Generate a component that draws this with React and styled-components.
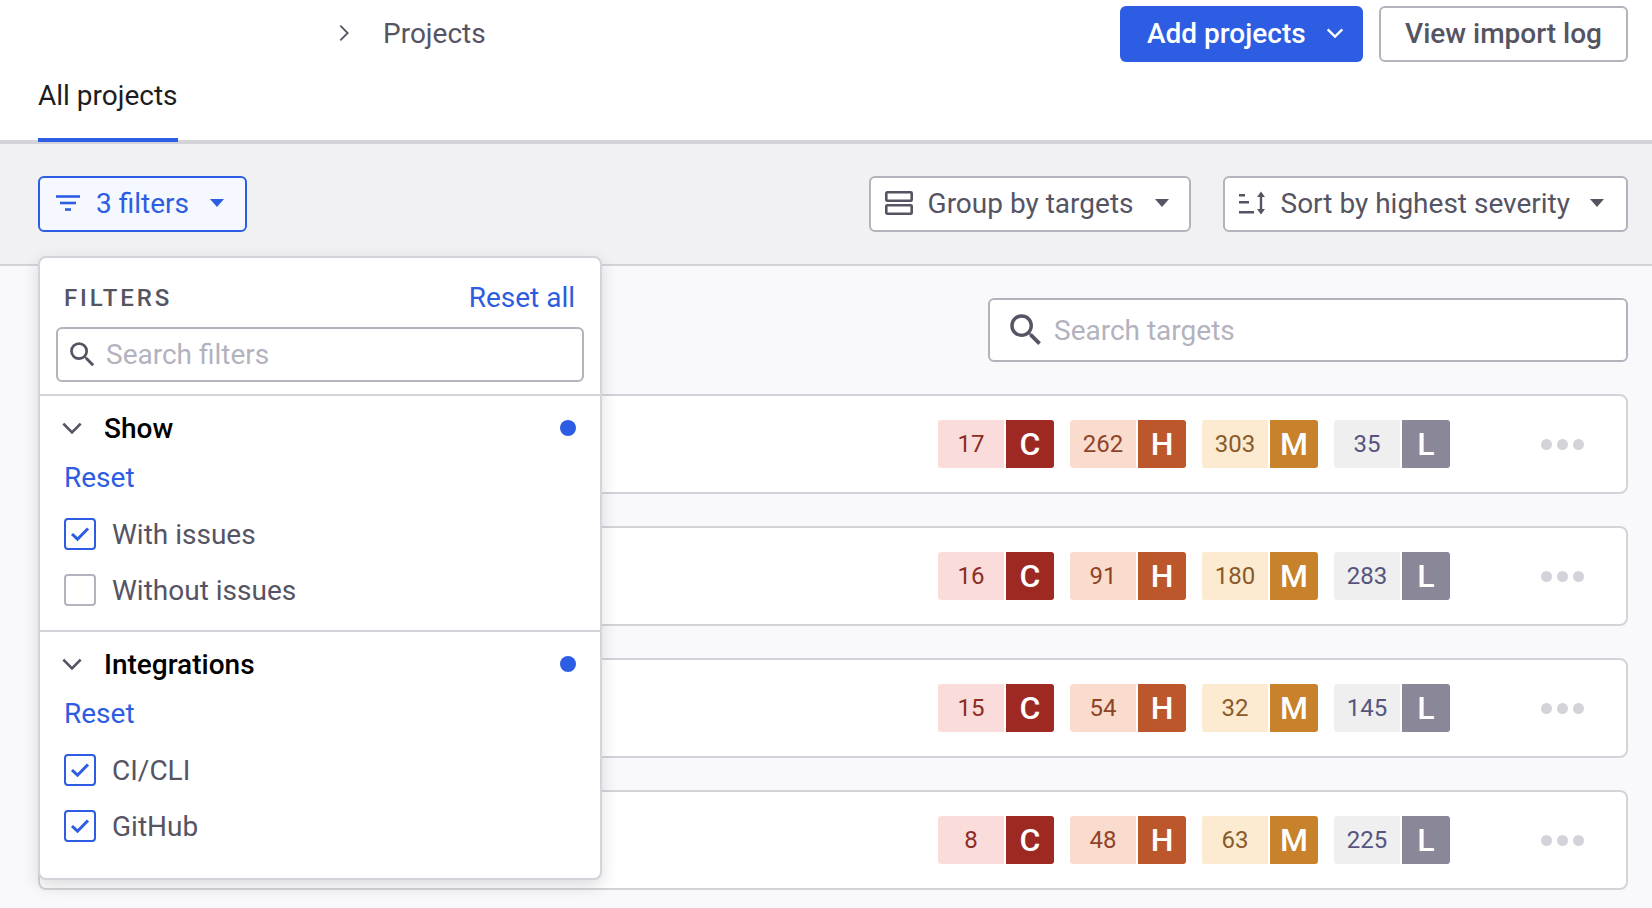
import React from "react";
import styled, { createGlobalStyle } from "styled-components";

const GlobalStyle = createGlobalStyle`
  html, body {
    margin: 0;
    height: 100%;
    overflow: hidden;
    background: #f9f9fb;
    font-family: Roboto, "Liberation Sans", sans-serif;
    color: #555463;
  }
  * {
    box-sizing: border-box;
  }
`;

const BLUE = "#2d5de2";

const Page = styled.div`
  height: 908px;
  overflow: hidden;
  display: flex;
  flex-direction: column;
`;

const Header = styled.header`
  background: #fff;
  height: 144px;
  border-bottom: 4px solid #d3d3d9;
  padding: 6px 24px 0 38px;
`;

const TopRow = styled.div`
  display: flex;
  align-items: center;
  height: 56px;
  gap: 16px;
`;

const Breadcrumb = styled.div`
  flex: 1;
  display: flex;
  align-items: center;
  gap: 28px;
  padding: 0 0 2px 295px;
  font-size: 28px;
  color: #555463;
`;

const PrimaryButton = styled.button`
  height: 56px;
  width: 243px;
  display: flex;
  align-items: center;
  gap: 18px;
  padding: 0 0 2px 27px;
  border: 0;
  border-radius: 6px;
  background: ${BLUE};
  color: #fff;
  font: 500 28px Roboto, sans-serif;
`;

const OutlineButton = styled.button`
  height: 56px;
  width: 249px;
  padding: 0 0 2px;
  border: 2px solid #b3b2bd;
  border-radius: 6px;
  background: #fff;
  color: #555463;
  font: 500 28px Roboto, sans-serif;
`;

const Tab = styled.div`
  width: max-content;
  height: 80px;
  padding-top: 13px;
  border-bottom: 4px solid ${BLUE};
  font-size: 28px;
  line-height: 42px;
  color: #1c1c21;
`;

const Toolbar = styled.div`
  height: 122px;
  background: #f1f1f4;
  border-bottom: 2px solid #d3d3d9;
  padding: 32px 24px 0 38px;
  display: flex;
  align-items: flex-start;
`;

const FilterAnchor = styled.div`
  position: relative;
  margin-right: auto;
`;

const Select = styled.button`
  height: 56px;
  display: flex;
  align-items: center;
  padding: ${(p) => p.$padding};
  gap: ${(p) => p.$gap}px;
  margin-left: ${(p) => p.$offset || 0}px;
  border: 2px solid ${(p) => (p.$active ? BLUE : "#b3b2bd")};
  border-radius: 6px;
  background: ${(p) => (p.$active ? "#f5f8ff" : "#fff")};
  color: ${(p) => (p.$active ? BLUE : "#555463")};
  font: 400 28px Roboto, sans-serif;
  white-space: nowrap;
`;

const Caret = styled.span`
  width: 0;
  height: 0;
  margin-left: ${(p) => p.$offset}px;
  border-left: 7.5px solid transparent;
  border-right: 7.5px solid transparent;
  border-top: 8px solid currentColor;
`;

const FilterMenu = styled.div`
  position: absolute;
  z-index: 2;
  top: 80px;
  left: 0;
  width: 564px;
  height: 624px;
  background: #fff;
  border: 2px solid #d3d3d9;
  border-radius: 8px;
  box-shadow: 0 6px 16px rgba(60, 60, 80, 0.18);
`;

const MenuHead = styled.div`
  height: 138px;
  padding: 22px 16px 0 16px;
  border-bottom: 2px solid #d3d3d9;
`;

const MenuTitleRow = styled.div`
  display: flex;
  justify-content: space-between;
  align-items: center;
  height: 36px;
  padding: 0 9px 0 8px;
  margin-bottom: 11px;
`;

const MenuTitle = styled.span`
  font-size: 24px;
  font-weight: 500;
  letter-spacing: 2.9px;
  color: #555463;
`;

const Link = styled.a`
  color: ${BLUE};
  font-size: 28px;
  line-height: 36px;
`;

const SearchBox = styled.div`
  display: flex;
  align-items: center;
  width: ${(p) => p.$width}px;
  height: ${(p) => p.$height}px;
  padding-left: ${(p) => p.$inset}px;
  gap: ${(p) => p.$gap}px;
  border: 2px solid #b3b2bd;
  border-radius: 6px;
  background: #fff;
  color: #b3b2bd;
  font-size: 28px;
`;

const Section = styled.section`
  height: 236px;
  padding: 14px 24px 0 24px;
  border-bottom: ${(p) => (p.$last ? "0" : "2px solid #d3d3d9")};
`;

const SectionHead = styled.div`
  display: flex;
  align-items: center;
  height: 36px;
  margin: 0 0 14px -5px;
`;

const SectionName = styled.span`
  flex: 1;
  margin-left: 19px;
  font-size: 28px;
  font-weight: 500;
  color: #000;
`;

const Dot = styled.span`
  width: 16px;
  height: 16px;
  border-radius: 50%;
  background: ${BLUE};
`;

const SectionReset = styled.div`
  margin-bottom: 22px;
`;

const Option = styled.label`
  display: flex;
  align-items: center;
  height: 32px;
  gap: 16px;
  margin-bottom: 24px;
  font-size: 28px;
`;

const Box = styled.span`
  width: 32px;
  height: 32px;
  display: flex;
  align-items: center;
  justify-content: center;
  border: 2px solid ${(p) => (p.$on ? BLUE : "#b3b2bd")};
  border-radius: 4px;
  background: #fff;
`;

const Content = styled.main`
  flex: 1;
  padding: 32px 24px 0 38px;
`;

const SearchRow = styled.div`
  display: flex;
  justify-content: flex-end;
  margin-bottom: 32px;
`;

const ProjectList = styled.div`
  display: flex;
  flex-direction: column;
  gap: 32px;
`;

const ProjectCard = styled.div`
  height: 100px;
  display: flex;
  align-items: center;
  justify-content: flex-end;
  background: #fff;
  border: 2px solid #d3d3d9;
  border-radius: 8px;
  padding-right: 42px;
`;

const Severities = styled.div`
  display: flex;
  gap: 16px;
  margin-right: 91px;
`;

const Severity = styled.div`
  display: flex;
  gap: 2px;
  height: 48px;
`;

const Count = styled.span`
  width: 66px;
  display: flex;
  align-items: center;
  justify-content: center;
  border-radius: 3px 0 0 3px;
  background: ${(p) => p.$bg};
  color: ${(p) => p.$fg};
  font-size: 24px;
`;

const Letter = styled.span`
  width: 48px;
  display: flex;
  align-items: center;
  justify-content: center;
  border-radius: 0 3px 3px 0;
  background: ${(p) => p.$bg};
  color: #fff;
  font-size: 32px;
  font-weight: 500;
`;

const Dots = styled.div`
  display: flex;
  gap: 5px;
`;

const MoreDot = styled.span`
  width: 11px;
  height: 11px;
  border-radius: 50%;
  background: #d3d3d9;
`;

const LEVELS = [
  { letter: "C", bg: "#fadcdb", fg: "#8b2c25", solid: "#9e2822" },
  { letter: "H", bg: "#fadcce", fg: "#8f4428", solid: "#bc572b" },
  { letter: "M", bg: "#fcebd1", fg: "#8a5a2b", solid: "#c7822b" },
  { letter: "L", bg: "#efefef", fg: "#555580", solid: "#8a8799" },
];

const PROJECTS = [
  [17, 262, 303, 35],
  [16, 91, 180, 283],
  [15, 54, 32, 145],
  [8, 48, 63, 225],
];

const SEARCH_PATH =
  "M9.5,3A6.5,6.5 0 0,1 16,9.5C16,11.11 15.41,12.59 14.44,13.73L14.71,14H15.5L20.5,19L19,20.5L14,15.5V14.71L13.73,14.44C12.59,15.41 11.11,16 9.5,16A6.5,6.5 0 0,1 3,9.5A6.5,6.5 0 0,1 9.5,3M9.5,5C7,5 5,7 5,9.5C5,12 7,14 9.5,14C12,14 14,12 14,9.5C14,7 12,5 9.5,5Z";

const SearchIcon = ({ size }) => (
  <svg width={size} height={size} viewBox="0 0 24 24" fill="#555463">
    <path d={SEARCH_PATH} />
  </svg>
);

const Chevron = ({ size, color, rotate = 0, width = 2 }) => (
  <svg
    width={size}
    height={size}
    viewBox="0 0 24 24"
    fill="none"
    stroke={color}
    strokeWidth={width}
    style={{ transform: `rotate(${rotate}deg)` }}
  >
    <path d="M4 8l8 8 8-8" />
  </svg>
);

const FilterIcon = () => (
  <svg width="24" height="16" viewBox="0 0 24 16" fill={BLUE}>
    <rect x="0" y="0.2" width="24" height="2.6" />
    <rect x="4" y="6.7" width="16" height="2.6" />
    <rect x="9" y="13.2" width="6" height="2.6" />
  </svg>
);

const GroupIcon = () => (
  <svg width="28" height="24" viewBox="0 0 28 24" fill="none" stroke="#555463" strokeWidth="2.6">
    <rect x="1.3" y="1.3" width="25.4" height="8.4" rx="1" />
    <rect x="1.3" y="14.3" width="25.4" height="8.4" rx="1" />
  </svg>
);

const SortIcon = () => (
  <svg width="28" height="24" viewBox="0 0 28 24" fill="#555463">
    <rect x="0" y="3" width="6" height="2.5" />
    <rect x="0" y="10" width="10" height="2.5" />
    <rect x="0" y="20" width="15" height="2.5" />
    <rect x="20.8" y="3" width="2.4" height="18" />
    <path d="M22 0.5l4 5.5h-8zM22 23.5l4-5.5h-8z" />
  </svg>
);

const CheckIcon = () => (
  <svg width="20" height="20" viewBox="0 0 20 20" fill="none" stroke={BLUE} strokeWidth="3">
    <path d="M2 10l5.5 5.2L18 4.5" />
  </svg>
);

const FilterOption = ({ on, children }) => (
  <Option>
    <Box $on={on}>{on && <CheckIcon />}</Box>
    {children}
  </Option>
);

const FilterSection = ({ name, last, options }) => (
  <Section $last={last}>
    <SectionHead>
      <Chevron size={26} color="#555463" width={2.5} />
      <SectionName>{name}</SectionName>
      <Dot />
    </SectionHead>
    <SectionReset>
      <Link>Reset</Link>
    </SectionReset>
    {options.map((o) => (
      <FilterOption key={o.label} on={o.on}>
        {o.label}
      </FilterOption>
    ))}
  </Section>
);

export default function App() {
  return (
    <Page>
      <GlobalStyle />
      <Header>
        <TopRow>
          <Breadcrumb>
            <Chevron size={22} color="#555463" rotate={-90} />
            Projects
          </Breadcrumb>
          <PrimaryButton>
            Add projects
            <Chevron size={22} color="#fff" width={2.5} />
          </PrimaryButton>
          <OutlineButton>View import log</OutlineButton>
        </TopRow>
        <Tab>All projects</Tab>
      </Header>
      <Toolbar>
        <FilterAnchor>
          <Select $active $padding="0 21px 2px 16px" $gap={16}>
            <FilterIcon />
            3 filters
            <Caret $offset={5} />
          </Select>
          <FilterMenu>
            <MenuHead>
              <MenuTitleRow>
                <MenuTitle>FILTERS</MenuTitle>
                <Link>Reset all</Link>
              </MenuTitleRow>
              <SearchBox $width={528} $height={55} $inset={8} $gap={7}>
                <SearchIcon size={33} />
                Search filters
              </SearchBox>
            </MenuHead>
            <FilterSection
              name="Show"
              options={[
                { label: "With issues", on: true },
                { label: "Without issues", on: false },
              ]}
            />
            <FilterSection
              name="Integrations"
              last
              options={[
                { label: "CI/CLI", on: true },
                { label: "GitHub", on: true },
              ]}
            />
          </FilterMenu>
        </FilterAnchor>
        <Select $padding="0 20px 2px 14px" $gap={15}>
          <GroupIcon />
          Group by targets
          <Caret $offset={6} />
        </Select>
        <Select $offset={32} $padding="0 22px 2px 14px" $gap={14}>
          <SortIcon />
          Sort by highest severity
          <Caret $offset={6} />
        </Select>
      </Toolbar>
      <Content>
        <SearchRow>
          <SearchBox $width={640} $height={64} $inset={15} $gap={7}>
            <SearchIcon size={42} />
            Search targets
          </SearchBox>
        </SearchRow>
        <ProjectList>
          {PROJECTS.map((counts, i) => (
            <ProjectCard key={i}>
              <Severities>
                {LEVELS.map((level, j) => (
                  <Severity key={level.letter}>
                    <Count $bg={level.bg} $fg={level.fg}>
                      {counts[j]}
                    </Count>
                    <Letter $bg={level.solid}>{level.letter}</Letter>
                  </Severity>
                ))}
              </Severities>
              <Dots>
                <MoreDot />
                <MoreDot />
                <MoreDot />
              </Dots>
            </ProjectCard>
          ))}
        </ProjectList>
      </Content>
    </Page>
  );
}
